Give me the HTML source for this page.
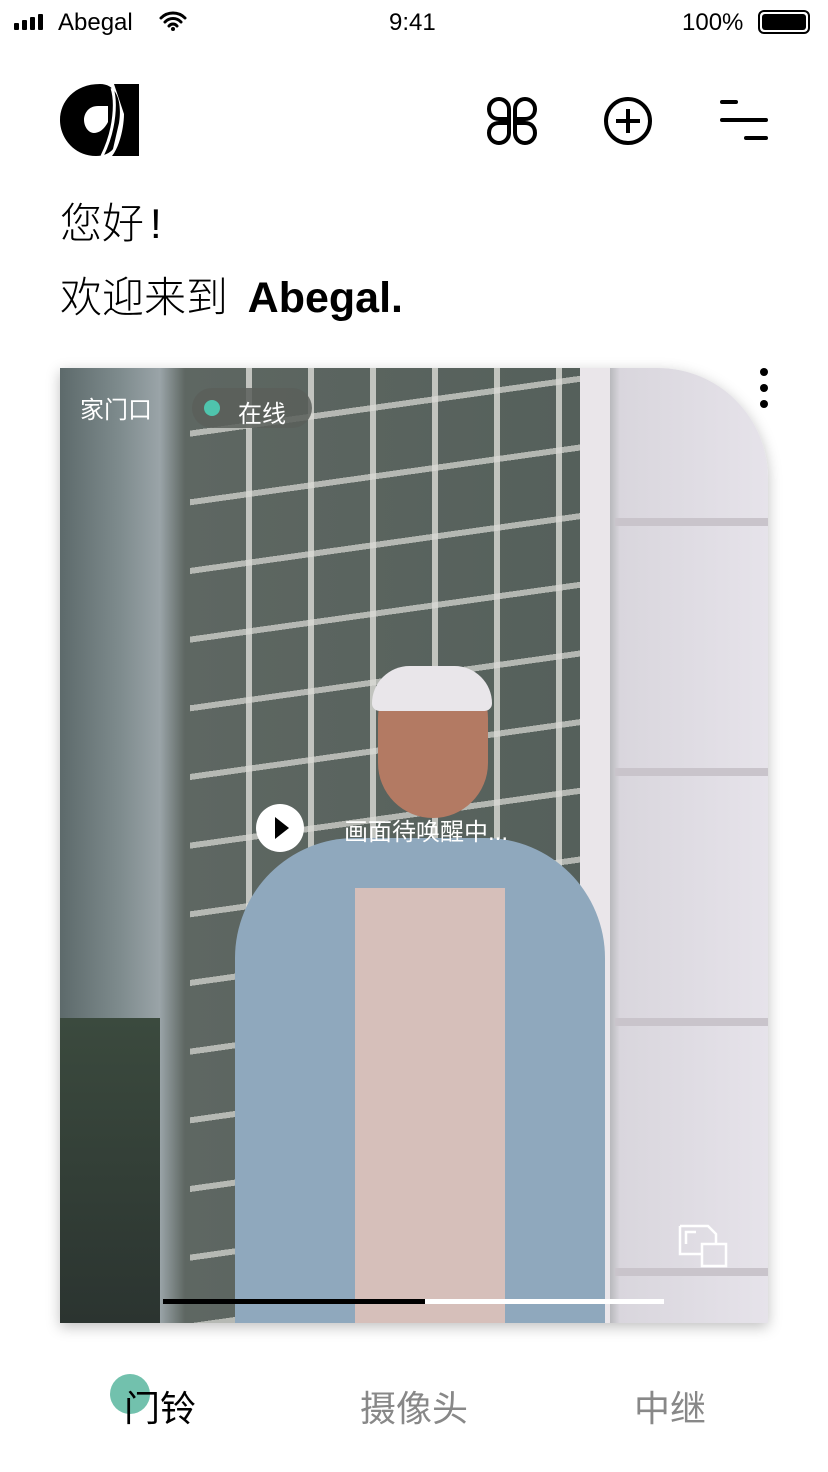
<!DOCTYPE html>
<html><head><meta charset="utf-8"><style>
*{margin:0;padding:0;box-sizing:border-box}
body{width:828px;height:1472px;background:#fff;font-family:"Liberation Sans","Noto Sans CJK SC",sans-serif;position:relative;overflow:hidden}
.abs{position:absolute}
.card{left:60px;top:368px;width:708px;height:955px;border-top-right-radius:110px;overflow:hidden;box-shadow:0 4px 14px rgba(0,0,0,.25);
background:linear-gradient(90deg,#5d6a6b 0,#7e8b8d 60px,#9aa4a8 100px,#5e6762 125px,#55605b 520px,#d9d6dd 560px,#e6e3ea 100%)}
</style></head><body>
<div class="abs" style="left:14px;top:14px;display:flex;align-items:flex-end;gap:3px">
<div style="width:5px;height:7px;background:#000;border-radius:1px"></div><div style="width:5px;height:10px;background:#000;border-radius:1px"></div><div style="width:5px;height:13px;background:#000;border-radius:1px"></div><div style="width:5px;height:16px;background:#000;border-radius:1px"></div></div>
<div class="abs" style="left:58px;top:9px;font-size:24px">Abegal</div>
<svg class="abs" style="left:158px;top:10px" width="30" height="22" viewBox="0 0 30 22"><path d="M3 8a17 17 0 0 1 24 0M7 12a11 11 0 0 1 16 0M11 16a5 5 0 0 1 8 0" stroke="#000" stroke-width="3" fill="none" stroke-linecap="round"/><circle cx="15" cy="19" r="2" fill="#000"/></svg>
<div class="abs" style="left:389px;top:9px;font-size:24px">9:41</div>
<div class="abs" style="left:682px;top:9px;font-size:24px">100%</div>
<div class="abs" style="left:758px;top:10px;width:52px;height:24px;border:2px solid #000;border-radius:6px;padding:2px"><div style="width:100%;height:100%;background:#000;border-radius:3px"></div></div>
<svg class="abs" style="left:60px;top:84px" width="80" height="72" viewBox="0 0 80 72"><path d="M40 0C14 0 0 18 0 36s14 36 36 36c8 0 14-3 17-7l6-26C62 20 58 0 40 0zM38 22c-10 0-14 8-14 14s4 13 10 13 11-5 14-11V22z" fill="#000" fill-rule="evenodd"/><path d="M54 0h25v72H52c8-10 12-30 12-42L54 0z" fill="#000"/><path d="M52 4c4 12 4 40-10 68" stroke="#fff" stroke-width="3" fill="none"/></svg>
<svg class="abs" style="left:486px;top:96px" width="52" height="50" viewBox="0 0 52 50" fill="none" stroke="#000" stroke-width="4"><path d="M13 3a10 10 0 0 0-10 10c0 6 4 10 10 10h10V13A10 10 0 0 0 13 3zM39 3a10 10 0 0 1 10 10c0 6-4 10-10 10H29V13A10 10 0 0 1 39 3zM13 47a10 10 0 0 1-10-10c0-6 4-10 10-10h10v10a10 10 0 0 1-10 10zM39 47a10 10 0 0 0 10-10c0-6-4-10-10-10H29v10a10 10 0 0 0 10 10z"/></svg>
<svg class="abs" style="left:602px;top:96px" width="52" height="50" viewBox="0 0 52 50" fill="none" stroke="#000" stroke-width="4"><circle cx="26" cy="25" r="22"/><path d="M26 13v24M14 25h24"/></svg>
<div class="abs" style="left:720px;top:100px;width:18px;height:4px;background:#000;border-radius:2px"></div>
<div class="abs" style="left:720px;top:118px;width:48px;height:4px;background:#000;border-radius:2px"></div>
<div class="abs" style="left:744px;top:136px;width:24px;height:4px;background:#000;border-radius:2px"></div>
<div class="abs" style="left:60px;top:190px;font-size:42px;font-weight:300">您好<span style="margin-left:6px">!</span></div>
<div class="abs" style="left:60px;top:264px;font-size:42px;font-weight:300">欢迎来到 <b style="font-weight:700;font-size:43px;margin-left:8px">Abegal.</b></div>
<div class="abs card">
 <div class="abs" style="left:130px;top:0;width:390px;height:955px;background:
 repeating-linear-gradient(90deg,transparent 0 56px,rgba(220,220,215,.8) 56px 62px),
 repeating-linear-gradient(172deg,transparent 0 62px,rgba(220,220,215,.7) 62px 68px)"></div>
 <div class="abs" style="left:520px;top:0;width:30px;height:955px;background:#eae6ea"></div>
 <div class="abs" style="left:555px;top:150px;width:153px;height:8px;background:#c9c4cb"></div>
 <div class="abs" style="left:555px;top:400px;width:153px;height:8px;background:#c9c4cb"></div>
 <div class="abs" style="left:555px;top:650px;width:153px;height:8px;background:#c9c4cb"></div>
 <div class="abs" style="left:555px;top:900px;width:153px;height:8px;background:#c9c4cb"></div>
 <div class="abs" style="left:0;top:650px;width:100px;height:305px;background:linear-gradient(#3b4a3e,#2b3430)"></div>
 <div class="abs" style="left:175px;top:470px;width:370px;height:485px;background:#8fa8bd;border-radius:120px 120px 0 0"></div>
 <div class="abs" style="left:295px;top:520px;width:150px;height:435px;background:#d6bfba"></div>
 <div class="abs" style="left:318px;top:300px;width:110px;height:150px;background:#b37a63;border-radius:50px 50px 55px 55px"></div>
 <div class="abs" style="left:312px;top:298px;width:120px;height:45px;background:#e9e6ea;border-radius:50px 50px 10px 10px"></div>
 <div class="abs" style="left:20px;top:22px;font-size:24px;color:#fff">家门口</div>
 <div class="abs" style="left:132px;top:20px;width:120px;height:40px;border-radius:20px;background:rgba(90,95,90,.85)"></div>
 <div class="abs" style="left:144px;top:32px;width:16px;height:16px;border-radius:50%;background:#4fc4ad"></div>
 <div class="abs" style="left:178px;top:26px;font-size:24px;color:#fff">在线</div>
 <div class="abs" style="left:196px;top:436px;width:48px;height:48px;border-radius:50%;background:#fff"></div>
 <div class="abs" style="left:215px;top:449px;width:0;height:0;border-left:14px solid #000;border-top:11px solid transparent;border-bottom:11px solid transparent"></div>
 <div class="abs" style="left:284px;top:444px;font-size:24px;color:#fff">画面待唤醒中...</div>
 <svg class="abs" style="left:618px;top:856px" width="52" height="44" viewBox="0 0 52 44" fill="none" stroke="#fff" stroke-width="2.5"><path d="M2 2h28l8 8v10M2 2v28h22"/><rect x="24" y="20" width="24" height="22"/><path d="M8 20V8h10"/></svg>
 <div class="abs" style="left:103px;top:931px;width:262px;height:5px;background:#000"></div>
 <div class="abs" style="left:365px;top:931px;width:239px;height:5px;background:#fff"></div>
</div>
<div class="abs" style="left:760px;top:368px;width:8px;height:8px;border-radius:50%;background:#000"></div>
<div class="abs" style="left:760px;top:384px;width:8px;height:8px;border-radius:50%;background:#000"></div>
<div class="abs" style="left:760px;top:400px;width:8px;height:8px;border-radius:50%;background:#000"></div>
<div class="abs" style="left:110px;top:1374px;width:40px;height:40px;border-radius:50%;background:#72c1ad"></div>
<div class="abs" style="left:124px;top:1380px;font-size:36px;color:#000">门铃</div>
<div class="abs" style="left:360px;top:1380px;font-size:36px;color:#888">摄像头</div>
<div class="abs" style="left:634px;top:1380px;font-size:36px;color:#888">中继</div>
</body></html>
